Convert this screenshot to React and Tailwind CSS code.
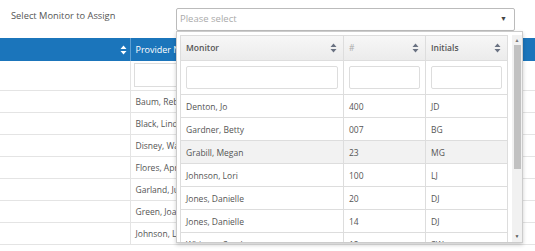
import { useState } from 'react';

const PROVIDERS = ['Baum, Rebecca', 'Black, Lindsay', 'Disney, Walter', 'Flores, April', 'Garland, Judy', 'Green, Joanne', 'Johnson, Lois'];

const MONITORS = [
  { name: 'Denton, Jo', num: '400', initials: 'JD' },
  { name: 'Gardner, Betty', num: '007', initials: 'BG' },
  { name: 'Grabill, Megan', num: '23', initials: 'MG', active: true },
  { name: 'Johnson, Lori', num: '100', initials: 'LJ' },
  { name: 'Jones, Danielle', num: '20', initials: 'DJ' },
  { name: 'Jones, Danielle', num: '14', initials: 'DJ' },
  { name: 'Whitney, Sarah', num: '12', initials: 'SW' },
];

function SortIcon({ className = 'text-gray-500' }) {
  return (
    <svg width="7" height="10" viewBox="0 0 7 10" className={className}>
      <path d="M3.5 0.5 L6.5 4 H0.5 Z M3.5 9.5 L6.5 6 H0.5 Z" fill="currentColor" />
    </svg>
  );
}

export default function App() {
  const [monitor] = useState('');

  return (
    <div className="relative h-[251px] w-[535px] overflow-hidden bg-white font-['Open_Sans',sans-serif] text-[#555]">
      <div className="flex h-[38px] items-start">
        <div className="w-[176px] pl-[11px] pt-[9px] text-[9.3px] leading-[14px] text-[#555]">Select Monitor to Assign</div>
        <div className="mt-[8px] flex h-[23px] w-[339px] items-center justify-between rounded-[2px] border border-[#bbb] bg-white pl-[3px] pr-[7px]">
          <span className="text-[9.5px] text-[#aaa]">{monitor || 'Please select'}</span>
          <span className="text-[7px] text-[#444]">▼</span>
        </div>
      </div>

      <table className="w-[535px] table-fixed border-collapse text-[8.5px] text-[#555]">
        <colgroup>
          <col className="w-[130px]" />
          <col className="w-[260px]" />
          <col />
        </colgroup>
        <thead>
          <tr className="h-[23px] bg-[#1b75bb] text-white">
            <th className="border-r border-[#5d9fd3] pr-[3px] text-right"><span className="inline-block align-middle"><SortIcon className="text-white" /></span></th>
            <th className="pl-[5px] text-left text-[9px] font-normal">Provider Name</th>
            <th />
          </tr>
        </thead>
        <tbody>
          <tr className="h-[29px] border-b border-[#e4e4e4]">
            <td className="border-r border-[#e4e4e4]" />
            <td className="px-[3px]"><div className="h-[24px] border border-[#ddd]" /></td>
            <td />
          </tr>
          {PROVIDERS.map((p) => (
            <tr key={p} className="h-[22px] border-b border-[#e4e4e4]">
              <td className="border-r border-[#e4e4e4]" />
              <td className="pl-[5px] pt-[2px] whitespace-nowrap">{p}</td>
              <td />
            </tr>
          ))}
        </tbody>
      </table>

      <div className="absolute left-[176px] top-[31px] flex h-[212px] w-[347px] border border-[#ccc] bg-white pl-[3px] pt-[3px] shadow-[0_2px_4px_rgba(0,0,0,0.2)]">
        <div className="h-full w-[330px] overflow-hidden">
          <table className="w-[328px] table-fixed border-collapse border border-[#ddd] text-[8.5px] text-[#555]">
            <colgroup>
              <col className="w-[163px]" />
              <col className="w-[82px]" />
              <col />
            </colgroup>
            <thead>
              <tr className="h-[25px] bg-gradient-to-b from-[#f7f7f7] to-[#ebebeb] text-left">
                <th className="border-r border-[#ddd] pl-[5px] pr-[6px] font-semibold">
                  <div className="flex items-center justify-between"><span>Monitor</span><SortIcon /></div>
                </th>
                <th className="border-r border-[#ddd] pl-[5px] pr-[6px] font-normal">
                  <div className="flex items-center justify-between"><span className="text-[#aaa]">#</span><SortIcon /></div>
                </th>
                <th className="pl-[5px] pr-[6px] font-semibold">
                  <div className="flex items-center justify-between"><span>Initials</span><SortIcon /></div>
                </th>
              </tr>
            </thead>
            <tbody>
              <tr className="h-[34px] border-t border-[#ddd]">
                <td className="border-r border-[#ddd] px-[5px]"><div className="h-[23px] rounded-[2px] border border-[#ddd]" /></td>
                <td className="border-r border-[#ddd] px-[5px]"><div className="h-[23px] rounded-[2px] border border-[#ddd]" /></td>
                <td className="px-[5px]"><div className="h-[23px] rounded-[2px] border border-[#ddd]" /></td>
              </tr>
              {MONITORS.map((m, i) => (
                <tr key={i} className={`h-[23px] border-t border-[#ddd] ${m.active ? 'bg-[#f2f2f2]' : ''}`}>
                  <td className="border-r border-[#ddd] px-[5px] pt-[2px] whitespace-nowrap">{m.name}</td>
                  <td className="border-r border-[#ddd] px-[5px] pt-[2px]">{m.num}</td>
                  <td className="px-[5px] pt-[2px]">{m.initials}</td>
                </tr>
              ))}
            </tbody>
          </table>
        </div>
        <div className="ml-auto flex h-full w-[10px] flex-col items-center bg-[#f1f1f1]">
          <span className="mt-[2px] text-[5px] leading-[6px] text-[#777]">▲</span>
          <div className="mt-[2px] h-[124px] w-[7px] bg-[#c1c1c1]" />
          <span className="mt-auto mb-[3px] text-[5px] leading-[6px] text-[#555]">▼</span>
        </div>
      </div>
    </div>
  );
}
